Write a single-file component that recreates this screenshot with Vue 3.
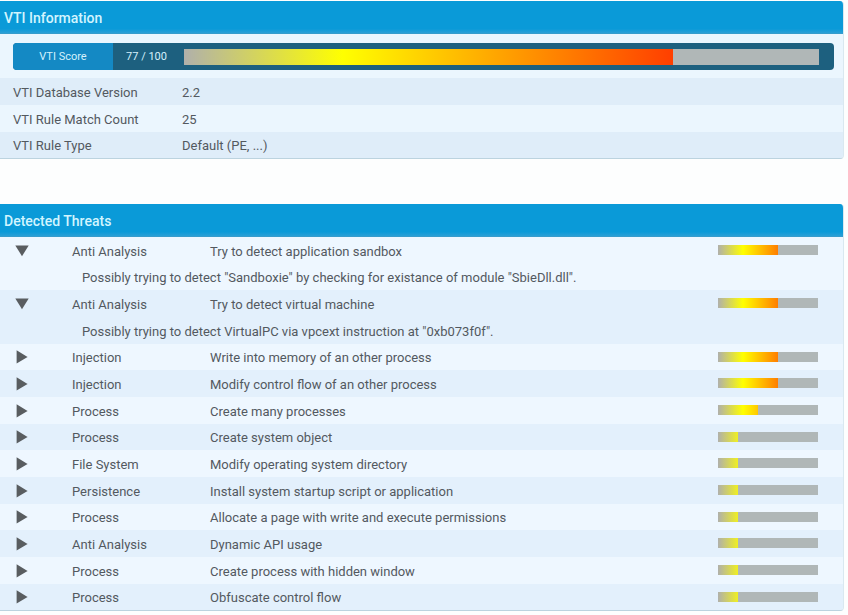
<script setup>
import { ref } from 'vue'

const score = 77
const facts = [
  { label: 'VTI Database Version', value: '2.2' },
  { label: 'VTI Rule Match Count', value: '25' },
  { label: 'VTI Rule Type', value: 'Default (PE, ...)' },
]

const threats = ref([
  { category: 'Anti Analysis', title: 'Try to detect application sandbox', level: 60, open: true, detail: 'Possibly trying to detect "Sandboxie" by checking for existance of module "SbieDll.dll".' },
  { category: 'Anti Analysis', title: 'Try to detect virtual machine', level: 60, open: true, detail: 'Possibly trying to detect VirtualPC via vpcext instruction at "0xb073f0f".' },
  { category: 'Injection', title: 'Write into memory of an other process', level: 60, open: false },
  { category: 'Injection', title: 'Modify control flow of an other process', level: 60, open: false },
  { category: 'Process', title: 'Create many processes', level: 40, open: false },
  { category: 'Process', title: 'Create system object', level: 20, open: false },
  { category: 'File System', title: 'Modify operating system directory', level: 20, open: false },
  { category: 'Persistence', title: 'Install system startup script or application', level: 20, open: false },
  { category: 'Process', title: 'Allocate a page with write and execute permissions', level: 20, open: false },
  { category: 'Anti Analysis', title: 'Dynamic API usage', level: 20, open: false },
  { category: 'Process', title: 'Create process with hidden window', level: 20, open: false },
  { category: 'Process', title: 'Obfuscate control flow', level: 20, open: false },
])
</script>

<template>
  <main class="page">
    <section class="panel info">
      <h2 class="panel-title">VTI Information</h2>
      <div class="score-wrap">
        <div class="score">
          <span class="score-label">VTI Score</span>
          <span class="score-value">{{ score }} / 100</span>
          <div class="bar score-bar" :style="{ '--level': score + '%' }"></div>
        </div>
      </div>
      <table class="facts">
        <tbody>
          <tr v-for="fact in facts" :key="fact.label">
            <th scope="row">{{ fact.label }}</th>
            <td>{{ fact.value }}</td>
          </tr>
        </tbody>
      </table>
    </section>

    <section class="panel threats-panel">
      <h2 class="panel-title">Detected Threats</h2>
      <table class="threats">
        <colgroup>
          <col class="col-toggle" />
          <col class="col-category" />
          <col />
          <col class="col-level" />
        </colgroup>
        <tbody>
          <template v-for="(threat, i) in threats" :key="i">
            <tr :class="{ shaded: i % 2 === 1 }">
              <td class="toggle-cell">
                <button
                  class="toggle"
                  type="button"
                  :aria-expanded="threat.open"
                  :aria-label="threat.title"
                  @click="threat.open = !threat.open"
                >
                  <svg width="14" height="14" viewBox="0 0 14 14" aria-hidden="true">
                    <path v-if="threat.open" d="M0.3 1.5H13.7L7 12.2Z" />
                    <path v-else d="M1.6 0.2V13.6L12.6 6.9Z" />
                  </svg>
                </button>
              </td>
              <td>{{ threat.category }}</td>
              <td>{{ threat.title }}</td>
              <td class="level-cell"><div class="bar level-bar" :style="{ '--level': threat.level + '%' }"></div></td>
            </tr>
            <tr v-if="threat.open && threat.detail" :class="{ shaded: i % 2 === 1 }">
              <td class="detail" colspan="4">{{ threat.detail }}</td>
            </tr>
          </template>
        </tbody>
      </table>
    </section>
  </main>
</template>

<style>
body {
  background: #fdfefe;
}
</style>

<style scoped>
.page {
  display: flex;
  flex-direction: column;
  gap: 45px;
  padding: 1px 4px 3px 0;
  font-family: "Segoe UI", Roboto, "Noto Sans", sans-serif;
  font-size: 13px;
  line-height: 20px;
  color: #53595f;
}

.panel {
  overflow: hidden;
  border-right: 1px solid #d9e8f0;
  border-bottom: 1px solid #bcd3df;
  border-radius: 0 4px 4px 0;
}

.info {
  background: #ebf6fe;
}

.threats-panel {
  background: #eef7ff;
}

.panel-title {
  margin: 0;
  padding: 7px 4px 6px;
  font-size: 14px;
  font-weight: 500;
  line-height: 20px;
  color: #d2f5ff;
  background: linear-gradient(to bottom, #0a9ad8 84%, #2a9fd6 97%, #4199c2);
}

.score-wrap {
  padding: 9px 9px 8px 13px;
}

.score {
  display: flex;
  align-items: center;
  height: 27px;
  padding-right: 15px;
  overflow: hidden;
  border-radius: 4px;
  background: #1d607f;
  color: #d5f1fc;
  font-size: 11px;
  line-height: 28px;
}

.score-label {
  width: 100px;
  background: #1489c4;
  text-align: center;
}

.score-value {
  width: 71px;
  padding-right: 4px;
  box-sizing: border-box;
  text-align: center;
}

.bar {
  background:
    linear-gradient(to right, transparent var(--level), #b0b7b7 var(--level)),
    linear-gradient(to right, #b0b0ab, #ffff00 25%, #ff0000 94%);
}

.score-bar {
  flex: 1;
  height: 16px;
}

table {
  width: 100%;
  border-collapse: collapse;
  table-layout: fixed;
}

th,
td {
  padding: 2px 0 0;
  text-align: left;
  font-weight: 400;
}

tr {
  height: 27px;
}

.facts th {
  width: 169px;
  padding-left: 13px;
}

.facts tr:nth-child(odd) {
  background: #dfedf9;
}

.facts tr:last-child {
  height: 26px;
}

.threats tr:nth-child(3n + 2) {
  height: 26px;
}

.threats .shaded {
  background: #e3f0fc;
}

.col-toggle {
  width: 72px;
}

.col-category {
  width: 138px;
}

.col-level {
  width: 125px;
}

.toggle-cell {
  padding: 0 0 0 15px;
}

.level-cell {
  padding: 0 0 1px;
}

.toggle {
  display: block;
  padding: 0;
  border: 0;
  background: none;
  cursor: pointer;
}

.toggle svg {
  display: block;
  fill: #595d60;
}

.threats .detail {
  padding-left: 82px;
}

.level-bar {
  width: 100px;
  height: 10px;
}
</style>
